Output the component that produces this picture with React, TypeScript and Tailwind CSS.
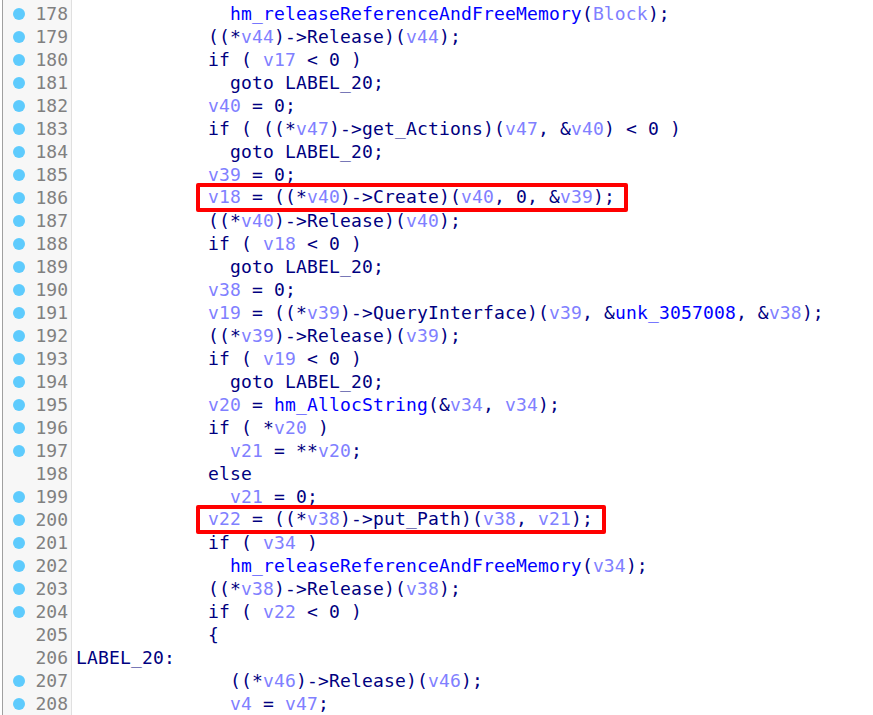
import React from 'react';

type Tok = [string, string];

const N = 'text-[#000080]';
const V = 'text-[#8080ff]';
const F = 'text-[#0000ff]';

const n = (s: string): Tok => [s, N];
const v = (s: string): Tok => [s, V];
const f = (s: string): Tok => [s, F];

type Line = { no: number; dot: boolean; indent: number; toks: Tok[]; boxed?: boolean };

const LINES: Line[] = [
  { no: 178, dot: true, indent: 14, toks: [f('hm_releaseReferenceAndFreeMemory'), n('('), v('Block'), n(');')] },
  { no: 179, dot: true, indent: 12, toks: [n('((*'), v('v44'), n(')->Release)('), v('v44'), n(');')] },
  { no: 180, dot: true, indent: 12, toks: [n('if ( '), v('v17'), n(' < 0 )')] },
  { no: 181, dot: true, indent: 14, toks: [n('goto LABEL_20;')] },
  { no: 182, dot: true, indent: 12, toks: [v('v40'), n(' = 0;')] },
  { no: 183, dot: true, indent: 12, toks: [n('if ( ((*'), v('v47'), n(')->get_Actions)('), v('v47'), n(', &'), v('v40'), n(') < 0 )')] },
  { no: 184, dot: true, indent: 14, toks: [n('goto LABEL_20;')] },
  { no: 185, dot: true, indent: 12, toks: [v('v39'), n(' = 0;')] },
  { no: 186, dot: true, indent: 12, boxed: true, toks: [v('v18'), n(' = ((*'), v('v40'), n(')->Create)('), v('v40'), n(', 0, &'), v('v39'), n(');')] },
  { no: 187, dot: true, indent: 12, toks: [n('((*'), v('v40'), n(')->Release)('), v('v40'), n(');')] },
  { no: 188, dot: true, indent: 12, toks: [n('if ( '), v('v18'), n(' < 0 )')] },
  { no: 189, dot: true, indent: 14, toks: [n('goto LABEL_20;')] },
  { no: 190, dot: true, indent: 12, toks: [v('v38'), n(' = 0;')] },
  { no: 191, dot: true, indent: 12, toks: [v('v19'), n(' = ((*'), v('v39'), n(')->QueryInterface)('), v('v39'), n(', &'), f('unk_3057008'), n(', &'), v('v38'), n(');')] },
  { no: 192, dot: true, indent: 12, toks: [n('((*'), v('v39'), n(')->Release)('), v('v39'), n(');')] },
  { no: 193, dot: true, indent: 12, toks: [n('if ( '), v('v19'), n(' < 0 )')] },
  { no: 194, dot: true, indent: 14, toks: [n('goto LABEL_20;')] },
  { no: 195, dot: true, indent: 12, toks: [v('v20'), n(' = '), f('hm_AllocString'), n('(&'), v('v34'), n(', '), v('v34'), n(');')] },
  { no: 196, dot: true, indent: 12, toks: [n('if ( *'), v('v20'), n(' )')] },
  { no: 197, dot: true, indent: 14, toks: [v('v21'), n(' = **'), v('v20'), n(';')] },
  { no: 198, dot: false, indent: 12, toks: [n('else')] },
  { no: 199, dot: true, indent: 14, toks: [v('v21'), n(' = 0;')] },
  { no: 200, dot: true, indent: 12, boxed: true, toks: [v('v22'), n(' = ((*'), v('v38'), n(')->put_Path)('), v('v38'), n(', '), v('v21'), n(');')] },
  { no: 201, dot: true, indent: 12, toks: [n('if ( '), v('v34'), n(' )')] },
  { no: 202, dot: true, indent: 14, toks: [f('hm_releaseReferenceAndFreeMemory'), n('('), v('v34'), n(');')] },
  { no: 203, dot: true, indent: 12, toks: [n('((*'), v('v38'), n(')->Release)('), v('v38'), n(');')] },
  { no: 204, dot: true, indent: 12, toks: [n('if ( '), v('v22'), n(' < 0 )')] },
  { no: 205, dot: false, indent: 12, toks: [n('{')] },
  { no: 206, dot: false, indent: 0, toks: [n('LABEL_20:')] },
  { no: 207, dot: true, indent: 14, toks: [n('((*'), v('v46'), n(')->Release)('), v('v46'), n(');')] },
  { no: 208, dot: true, indent: 14, toks: [v('v4'), n(' = '), v('v47'), n(';')] },
];

export default function App() {
  return (
    <div className="flex h-[715px] w-[873px] overflow-hidden bg-white font-['DejaVu_Sans_Mono',monospace] text-[18px] leading-[23px]">
      <div className="ml-[2px] flex w-[70px] shrink-0 flex-col border-l border-r border-l-[#a0a0a0] border-r-[#e0e0e0] bg-[#f7f7f7] pt-[2px]">
        {LINES.map((l) => (
          <div key={l.no} className="flex h-[23px] items-center pr-[3px]">
            <div className="flex w-[32px] justify-center">
              {l.dot && <span className="h-[12px] w-[12px] rounded-full bg-[#5ecbfd]" />}
            </div>
            <span className="flex-1 text-right text-[#808080]">{l.no}</span>
          </div>
        ))}
      </div>
      <div className="flex flex-1 flex-col pl-[4px] pt-[2px] tracking-[0.16px]">
        {LINES.map((l) => (
          <div key={l.no} className="h-[23px] whitespace-pre">
            {' '.repeat(l.indent)}
            <span className="relative">
              {l.boxed && (
                <span className="absolute -bottom-[4px] -left-[12px] -right-[13px] -top-[4px] rounded-[2px] border-[4px] border-[#f00]" />
              )}
              {l.toks.map((t, i) => (
                <span key={i} className={`relative ${l.boxed ? '-top-[1px]' : ''} ${t[1]}`}>
                  {t[0]}
                </span>
              ))}
            </span>
          </div>
        ))}
      </div>
    </div>
  );
}
